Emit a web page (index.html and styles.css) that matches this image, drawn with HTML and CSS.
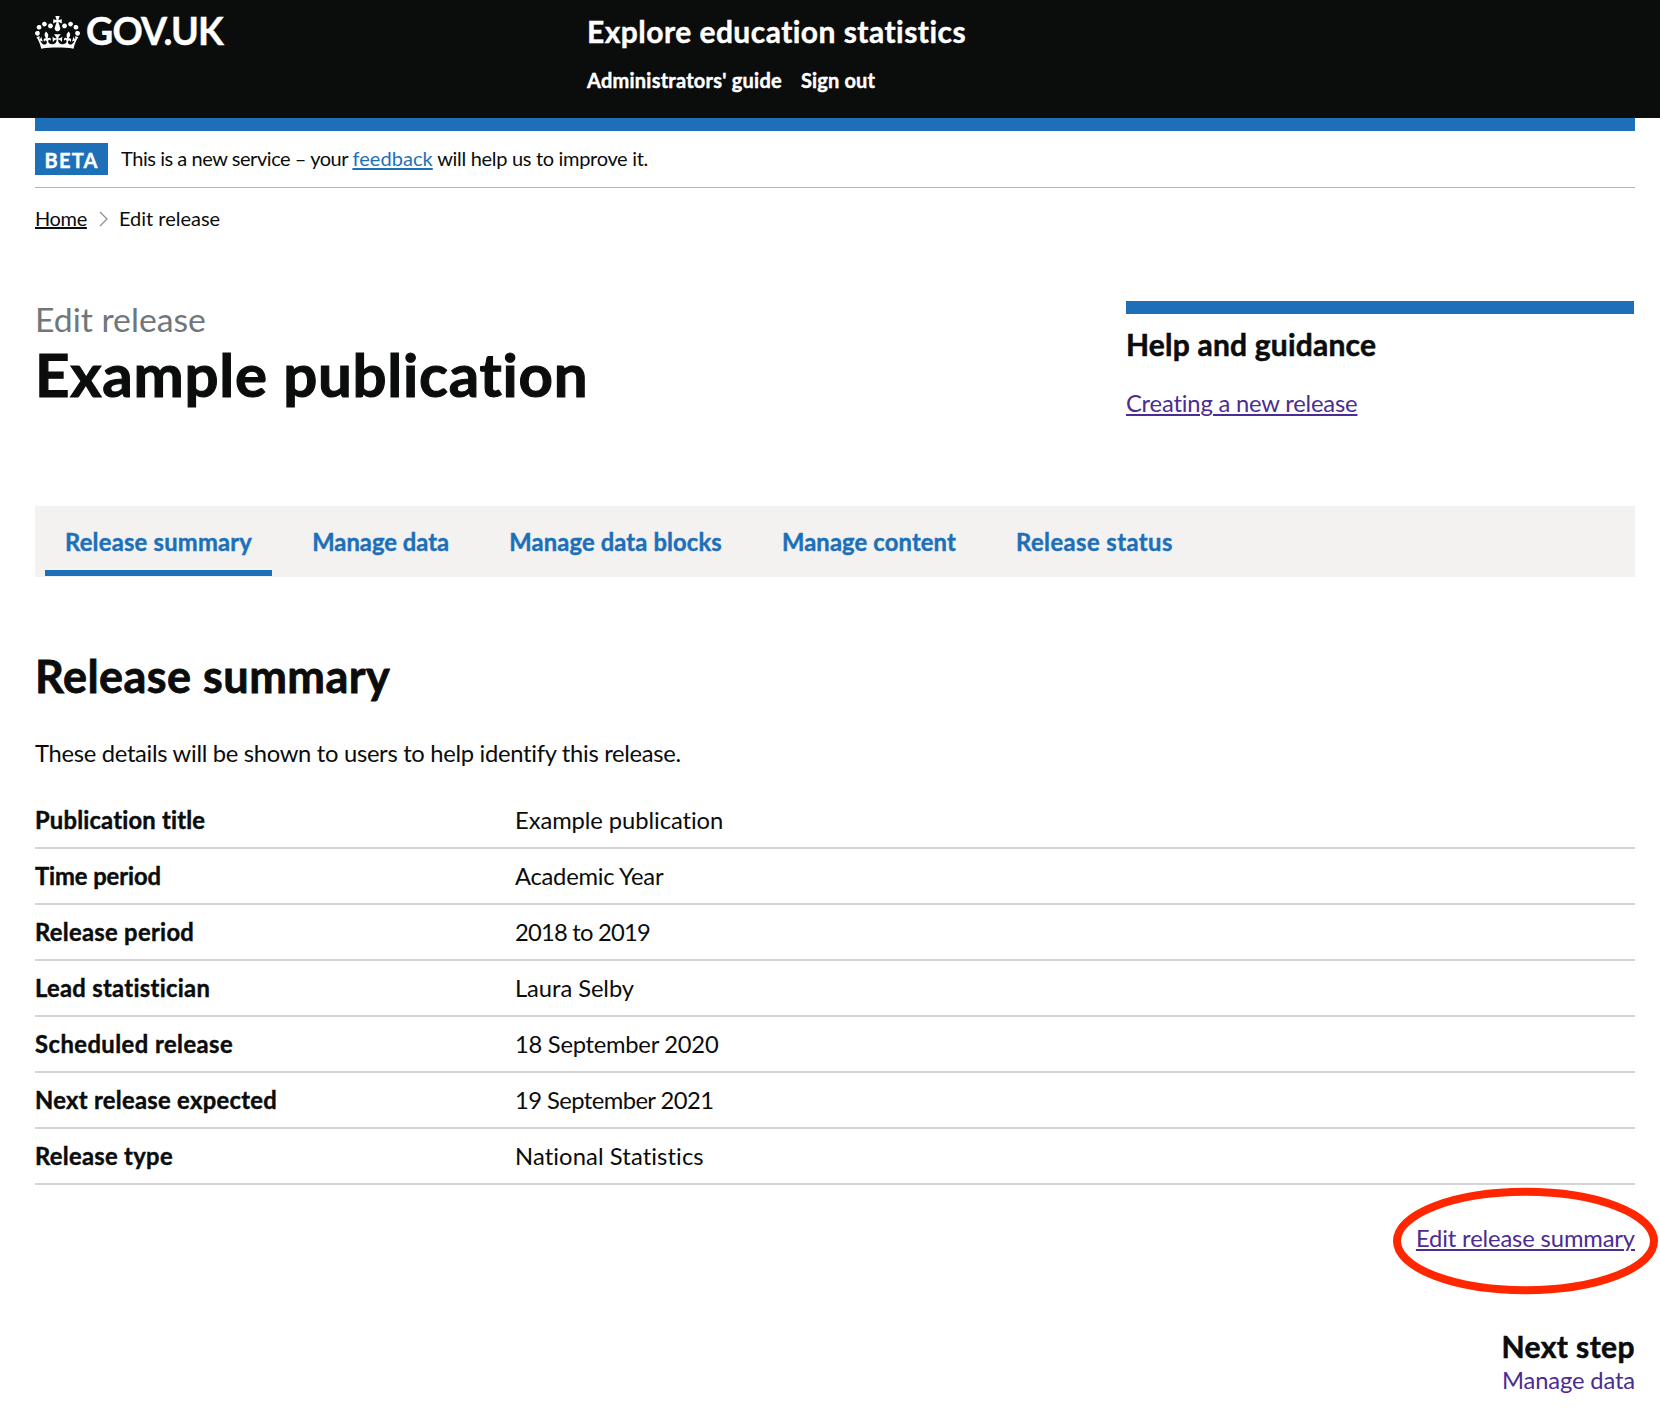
FILE: index.html
```html
<!DOCTYPE html>
<html lang="en">
<head>
<meta charset="utf-8">
<title>Edit release - Explore education statistics</title>
<link rel="stylesheet" href="styles.css">
</head>
<body>
<header class="header">
  <a class="logo">
    <svg class="crown" viewBox="0 0 132 97" width="45" height="33" aria-hidden="true"><path fill="currentColor" fill-rule="evenodd" d="M25 30.2c3.5 1.5 7.7-.2 9.1-3.7 1.5-3.6-.2-7.8-3.9-9.2-3.6-1.4-7.6.3-9.1 3.9-1.4 3.5.3 7.5 3.9 9zM9 39.5c3.6 1.5 7.8-.2 9.2-3.7 1.5-3.6-.2-7.8-3.9-9.1-3.6-1.5-7.6.2-9.1 3.8-1.4 3.5.3 7.5 3.8 9zM4.4 57.2c3.5 1.5 7.7-.2 9.1-3.8 1.5-3.6-.2-7.7-3.9-9.1-3.5-1.5-7.6.3-9.1 3.8-1.4 3.5.3 7.6 3.9 9.1zm38.3-21.4c3.5 1.5 7.7-.2 9.1-3.8 1.5-3.6-.2-7.7-3.9-9.1-3.6-1.5-7.6.3-9.1 3.8-1.3 3.6.4 7.7 3.9 9.1zm64.4-5.6c-3.6 1.5-7.8-.2-9.1-3.7-1.5-3.6.2-7.8 3.8-9.2 3.6-1.4 7.7.3 9.2 3.9 1.3 3.5-.4 7.5-3.9 9zm15.9 9.3c-3.6 1.5-7.7-.2-9.1-3.7-1.5-3.6.2-7.8 3.7-9.1 3.6-1.5 7.7.2 9.2 3.8 1.5 3.5-.3 7.5-3.8 9zm4.7 17.7c-3.6 1.5-7.8-.2-9.2-3.8-1.5-3.6.2-7.7 3.9-9.1 3.6-1.5 7.7.3 9.2 3.8 1.3 3.5-.4 7.6-3.9 9.1zM89.3 35.8c-3.6 1.5-7.8-.2-9.2-3.8-1.4-3.6.2-7.7 3.9-9.1 3.6-1.5 7.7.3 9.2 3.8 1.4 3.6-.3 7.7-3.9 9.1zM69.7 17.7l8.9 4.7V9.3l-8.9 2.8c-.2-.3-.5-.6-.9-.9L72.4 0H59.6l3.5 11.2c-.3.3-.6.5-.9.9l-8.8-2.8v13.1l8.8-4.7c.3.3.6.7.9.9l-5 15.4v.1c-.2.8-.4 1.6-.4 2.4 0 4.1 3.1 7.5 7 8.1h.2c.3 0 .7.1 1 .1.4 0 .7 0 1-.1h.2c4-.6 7.1-4.1 7.1-8.1 0-.8-.1-1.7-.4-2.4V34l-5.1-15.4c.4-.2.7-.6 1-.9zM66 92.8c16.9 0 32.8 1.1 47.1 3.2 4-16.9 8.9-26.7 14-33.5l-9.6-3.4c1 4.9 1.1 7.2 0 10.2-1.5-1.4-3-4.3-4.2-8.7L108.6 76c2.8-2 5-3.2 7.5-3.3-4.4 9.4-10 11.9-13.6 11.2-4.3-.8-6.3-4.6-5.6-7.9 1-4.7 5.7-5.9 8-.5 4.3-8.7-3-11.4-7.6-8.8 7.1-7.2 7.9-13.5 2.1-21.1-8 6.1-8.1 12.3-4.5 20.8-4.7-5.4-12.1-2.5-9.5 6.2 3.4-5.2 7.9-2 7.2 3.1-.6 4.3-6.4 7.8-13.5 7.2-10.3-.9-10.9-8-11.2-13.8 2.5-.5 7.1 1.8 11 7.3L80.2 60c-4.1 4.4-8 5.3-12.3 5.4 1.4-4.4 8-11.6 8-11.6H55.5s6.4 7.2 7.9 11.6c-4.2-.1-8-1-12.3-5.4l1.4 16.4c3.9-5.5 8.5-7.7 10.9-7.3-.3 5.8-.9 12.8-11.1 13.8-7.2.6-12.9-2.9-13.5-7.2-.7-5 3.8-8.3 7.1-3.1 2.7-8.7-4.6-11.6-9.4-6.2 3.7-8.5 3.6-14.7-4.6-20.8-5.8 7.6-5 13.9 2.2 21.1-4.7-2.6-11.9.1-7.7 8.8 2.3-5.5 7.1-4.2 8.1.5.7 3.3-1.3 7.1-5.7 7.9-3.5.7-9-1.8-13.5-11.2 2.5.1 4.7 1.3 7.5 3.3l-4.7-15.4c-1.2 4.4-2.7 7.2-4.3 8.7-1.1-3-.9-5.3 0-10.2l-9.5 3.4c5 6.9 9.9 16.7 14 33.5 14.8-2.1 30.8-3.2 47.7-3.2z"/></svg>
    <span class="logo-text">GOV.UK</span>
  </a>
  <div class="header-content">
    <div class="service-name">Explore education statistics</div>
    <nav class="header-nav">
      <a>Administrators' guide</a>
      <a class="sign-out">Sign out</a>
    </nav>
  </div>
</header>

<div class="container">
  <div class="phase-banner">
    <strong class="tag">BETA</strong>
    <span class="phase-text">This is a new service – your <a class="link feedback">feedback</a><span class="phase-end"> will help us to improve it.</span></span>
  </div>

  <nav class="breadcrumbs">
    <a class="home">Home</a>
    <svg class="chevron" width="10" height="16" viewBox="0 0 10 16" aria-hidden="true"><path d="M1 1l7 7-7 7" fill="none" stroke="#8a9093" stroke-width="1.3"/></svg>
    <span class="current">Edit release</span>
  </nav>

  <div class="title-row">
    <div>
      <span class="caption">Edit release</span>
      <h1 class="title">Example publication</h1>
    </div>
    <aside class="help">
      <h2 class="help-title">Help and guidance</h2>
      <a class="link visited">Creating a new release</a>
    </aside>
  </div>

  <nav class="tabs">
    <a class="tab tab-active">Release summary</a>
    <a class="tab tab-data">Manage data</a>
    <a class="tab">Manage data blocks</a>
    <a class="tab">Manage content</a>
    <a class="tab tab-status">Release status</a>
  </nav>

  <main>
    <h2 class="section-title">Release summary</h2>
    <p class="intro">These details will be shown to users to help identify this release.</p>
    <dl class="summary">
      <div class="row"><dt class="t1">Publication title</dt><dd class="n0">Example publication</dd></div>
      <div class="row"><dt class="t0">Time period</dt><dd class="n1">Academic Year</dd></div>
      <div class="row"><dt class="t2">Release period</dt><dd class="n3">2018 to 2019</dd></div>
      <div class="row"><dt class="t2">Lead statistician</dt><dd class="n0">Laura Selby</dd></div>
      <div class="row"><dt class="t3">Scheduled release</dt><dd class="n1">18 September 2020</dd></div>
      <div class="row"><dt class="t2">Next release expected</dt><dd class="n2">19 September 2021</dd></div>
      <div class="row"><dt class="t2">Release type</dt><dd class="p1">National Statistics</dd></div>
    </dl>
    <div class="edit">
      <a class="link visited edit-link">Edit release summary</a>
      <svg class="ring" width="266" height="108" viewBox="0 0 266 108" aria-hidden="true"><ellipse cx="132.5" cy="54" rx="128.5" ry="49.2" fill="none" stroke="#ff2600" stroke-width="8"/></svg>
    </div>
    <div class="next">
      <h2 class="next-title">Next step</h2>
      <a class="visited next-link">Manage data</a>
    </div>
  </main>
</div>
</body>
</html>
```
FILE: styles.css
```css
* { box-sizing: border-box; }

body {
  margin: 0;
  background: #fff;
  color: #0b0c0c;
  font: 400 23.75px/31px Lato, "Noto Sans", sans-serif;
  font-variant-ligatures: none;
  white-space: nowrap;
}

h1, h2, p, dl, dd { margin: 0; }

/* Slightly heavier bold */
h1, h2, dt, .header, .tag, .tab { -webkit-text-stroke: 0.018em currentColor; }

.header {
  display: grid;
  grid-template-columns: 552px 1fr;
  height: 118px;
  padding: 12px 25px 0 35px;
  background: #0b0c0c;
  color: #fff;
  font-weight: 700;
}

.logo {
  display: flex;
  align-items: flex-start;
  gap: 6px;
}

.crown { margin-top: 4px; }

.logo-text {
  font-size: 37.5px;
  line-height: 38px;
  letter-spacing: -0.022em;
}

.service-name {
  font-size: 30px;
  line-height: 38px;
  letter-spacing: 0.0154em;
}

.header-nav {
  display: flex;
  gap: 19px;
  margin-top: 18px;
  font-size: 20px;
  line-height: 25px;
  letter-spacing: 0.012em;
}

.sign-out { letter-spacing: 0.008em; }

.container { padding: 0 25px 0 35px; }

.phase-banner {
  display: flex;
  align-items: flex-start;
  gap: 13px;
  height: 70px;
  padding-top: 12px;
  border-top: 13px solid #1d70b8;
  border-bottom: 1px solid #b1b4b6;
  font-size: 20px;
}

.tag {
  width: 73px;
  height: 32px;
  padding-left: 9.5px;
  background: #1d70b8;
  color: #fff;
  line-height: 34px;
  letter-spacing: 0.0623em;
}

.phase-text {
  line-height: 31px;
  letter-spacing: -0.0225em;
}

.feedback { letter-spacing: 0.003em; }
.phase-end { letter-spacing: -0.0155em; }

.link {
  color: #1d70b8;
  text-decoration: underline;
  text-decoration-thickness: 2px;
  text-underline-offset: 2px;
}

.link.visited, .visited { color: #4c2c92; }

.breadcrumbs {
  display: flex;
  align-items: center;
  height: 25px;
  margin-top: 18px;
  font-size: 20px;
  line-height: 25px;
}

.home {
  letter-spacing: -0.018em;
  text-decoration: underline;
  text-decoration-thickness: 2px;
  text-underline-offset: 1px;
}

.chevron { margin: 1px 10px 0 12px; }

.title-row {
  display: grid;
  grid-template-columns: 1fr 508px;
  height: 207px;
  margin-top: 68px;
}

.caption {
  display: block;
  color: #6f777b;
  font-size: 33.75px;
  line-height: 40px;
}

.title {
  margin-top: 4px;
  font-size: 60px;
  line-height: 63px;
  letter-spacing: 0.0125em;
}

.help {
  align-self: start;
  margin: 2px 1px 0 -1px;
  padding-top: 11px;
  border-top: 13px solid #1d70b8;
  letter-spacing: -0.0074em;
}

.help-title {
  margin-bottom: 25px;
  font-size: 30px;
  line-height: 38px;
  letter-spacing: 0.007em;
}

.tabs {
  display: flex;
  gap: 20px;
  height: 71px;
  padding-left: 10px;
  background: #f3f2f1;
}

.tab {
  height: 70px;
  padding: 7px 20px 0;
  border-bottom: 6px solid transparent;
  color: #1d70b8;
  font-weight: 700;
  line-height: 58px;
  letter-spacing: 0.0062em;
}

.tab-active {
  border-color: #1d70b8;
  letter-spacing: 0.0095em;
}

.tab-data { letter-spacing: 0.0015em; }
.tab-status { letter-spacing: 0.0192em; }

.section-title {
  margin-top: 76px;
  font-size: 45px;
  line-height: 47px;
  letter-spacing: 0.0105em;
}

.intro {
  margin: 38px 0 36px;
  letter-spacing: -0.0125em;
}

.row {
  display: grid;
  grid-template-columns: 480px 1fr;
  height: 56px;
  padding-top: 12px;
  border-bottom: 2px solid #d4d6d6;
}

.row:first-child {
  height: 44px;
  padding-top: 0;
}

dt { font-weight: 700; }

/* Tracking adjustments for labels (t) and values (n tighter, p looser) */
.t0 { letter-spacing: -0.0031em; }
.t1 { letter-spacing: 0.0085em; }
.t2 { letter-spacing: 0.0128em; }
.t3 { letter-spacing: 0.0198em; }
.n0 { letter-spacing: -0.003em; }
.n1 { letter-spacing: -0.011em; }
.n2 { letter-spacing: -0.0235em; }
.n3 { letter-spacing: -0.0326em; }
.p1 { letter-spacing: 0.0045em; }

.edit {
  position: relative;
  margin-top: 38px;
  text-align: right;
}

.edit-link { letter-spacing: -0.0055em; }

.ring {
  position: absolute;
  top: -36px;
  right: -24px;
}

.next {
  margin-top: 74px;
  text-align: right;
}

.next-title {
  margin-bottom: 1px;
  font-size: 30px;
  line-height: 36px;
  letter-spacing: 0.014em;
}

.next-link { letter-spacing: -0.006em; }
```
